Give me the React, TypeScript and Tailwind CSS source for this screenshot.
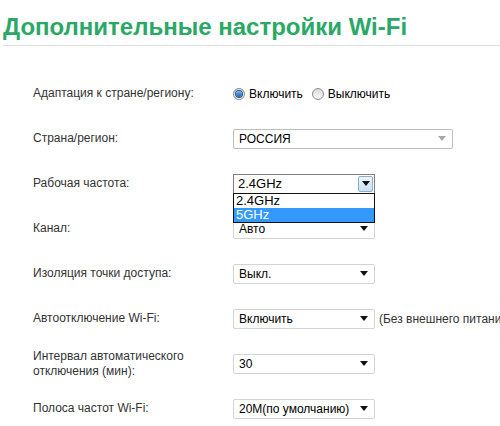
import React from "react";

function Arrow({ gray }: { gray?: boolean }) {
  return (
    <svg width="8" height="5" viewBox="0 0 8 5" className="shrink-0">
      <path d="M0 0 H8 L4 5 Z" fill={gray ? "#a8a8a8" : "#111"} />
    </svg>
  );
}

function Select({ value, width = "w-[142px]" }: { value: string; width?: string }) {
  return (
    <div
      className={`flex h-[20px] ${width} shrink-0 items-center justify-between rounded-[2px] border border-[#d4d4d4] bg-white pl-[5px] pr-[6px] text-[12px] text-black`}
    >
      <span>{value}</span>
      <Arrow />
    </div>
  );
}

function Radio({ checked }: { checked?: boolean }) {
  return (
    <span className="flex h-[12px] w-[12px] items-center justify-center rounded-full border border-[#8d8d8d] bg-gradient-to-b from-[#d9d9d9] to-[#fafafa]">
      {checked && (
        <span className="h-[6px] w-[6px] rounded-full bg-gradient-to-b from-[#7ab6ec] to-[#1c5fa8] shadow-[0_0_0_1px_#27568c]" />
      )}
    </span>
  );
}

function Row({ label, children }: { label: React.ReactNode; children: React.ReactNode }) {
  return (
    <div className="flex h-[45px] items-center">
      <div className="w-[233px] shrink-0 pl-[33px] text-[12px] leading-[15px] text-[#333]">{label}</div>
      <div className="flex items-center">{children}</div>
    </div>
  );
}

export default function App() {
  return (
    <div
      className="h-[426px] w-[500px] overflow-hidden bg-white"
      style={{ fontFamily: '"Liberation Sans", Arial, sans-serif' }}
    >
      <div className="ml-[3px] h-[46px] border-b border-[#dcdcdc] pt-[13px]">
        <h1 className="text-[24px] font-bold leading-[28px] text-[#2aa866]">
          Дополнительные настройки Wi-Fi
        </h1>
      </div>

      <div className="mt-[25px] flex flex-col">
        <Row label="Адаптация к стране/региону:">
          <div className="flex items-center text-[12px] text-black">
            <Radio checked />
            <span className="ml-[4px]">Включить</span>
            <span className="ml-[9px]">
              <Radio />
            </span>
            <span className="ml-[4px]">Выключить</span>
          </div>
        </Row>

        <Row label="Страна/регион:">
          <div className="flex h-[20px] w-[220px] items-center justify-between rounded-[2px] border border-[#bdbdbd] bg-white pl-[5px] pr-[6px] text-[12px] text-black">
            <span>РОССИЯ</span>
            <Arrow gray />
          </div>
        </Row>

        <Row label="Рабочая частота:">
          <div className="relative z-10">
            <div className="flex h-[20px] w-[142px] items-center justify-between border border-[#7f7f7f] bg-white pl-[4px] pr-[1px] text-[13px] text-black">
              <span>2.4GHz</span>
              <span className="flex h-[16px] w-[15px] items-center justify-center rounded-[2px] border border-[#8aaed0] bg-gradient-to-b from-[#eef6fd] to-[#c9e1f5]">
                <Arrow />
              </span>
            </div>
            <div className="absolute left-0 top-[19px] w-[142px] border border-[#111] bg-white text-[13px] leading-[14px]">
              <div className="pl-[2px] text-black">2.4GHz</div>
              <div className="bg-[#3399ff] pl-[2px] text-white">5GHz</div>
            </div>
          </div>
        </Row>

        <Row label="Канал:">
          <Select value="Авто" />
        </Row>

        <Row label="Изоляция точки доступа:">
          <Select value="Выкл." />
        </Row>

        <Row label="Автоотключение Wi-Fi:">
          <Select value="Включить" />
          <span className="ml-[4px] whitespace-nowrap text-[12px] text-[#333]">
            (Без внешнего питания)
          </span>
        </Row>

        <Row
          label={
            <>
              Интервал автоматического
              <br />
              отключения (мин):
            </>
          }
        >
          <Select value="30" />
        </Row>

        <Row label="Полоса частот Wi-Fi:">
          <Select value="20M(по умолчанию)" />
        </Row>
      </div>
    </div>
  );
}
